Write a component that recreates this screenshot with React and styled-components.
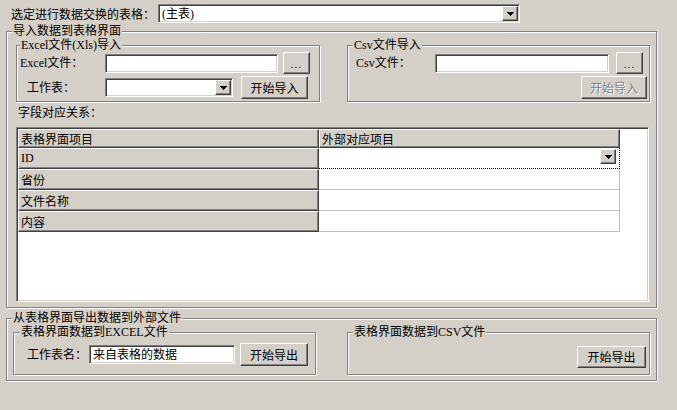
import React from "react";
import styled, { createGlobalStyle } from "styled-components";

const GlobalStyle = createGlobalStyle`
  html, body {
    margin: 0;
    padding: 0;
    background: #d4d0c8;
  }
  body {
    font-family: "Liberation Serif", "Noto Sans CJK SC", serif;
    font-size: 12px;
    color: #000;
  }
`;

const Window = styled.div`
  width: 677px;
  height: 410px;
  box-sizing: border-box;
  background: #d4d0c8;
  overflow: hidden;
  padding: 4px 0 0 6px;
  display: flex;
  flex-direction: column;
`;

const TopRow = styled.div`
  display: flex;
  align-items: center;
  height: 19px;
  padding-left: 5px;
`;

const Label = styled.span`
  width: ${(p) => p.$w}px;
  padding-left: ${(p) => p.$pl || 0}px;
  box-sizing: border-box;
  flex-shrink: 0;
  white-space: nowrap;
  line-height: 14px;
`;

const sunken = `
  box-sizing: border-box;
  border: 1px solid;
  border-color: #808080 #ffffff #ffffff #808080;
  box-shadow: inset 1px 1px 0 #404040, inset -1px -1px 0 #d4d0c8;
  background: #fff;
`;

const raised = `
  box-sizing: border-box;
  border: 1px solid;
  border-color: #ffffff #404040 #404040 #ffffff;
  box-shadow: inset -1px -1px 0 #808080;
  background: #d4d0c8;
`;

const TextField = styled.div`
  ${sunken}
  width: ${(p) => p.$w}px;
  height: 19px;
  padding: 2px 3px 0;
  line-height: 14px;
  white-space: nowrap;
  overflow: hidden;
`;

const ComboBox = styled.div`
  ${sunken}
  width: ${(p) => p.$w}px;
  height: 19px;
  padding: 1px;
  display: flex;
`;

const ComboText = styled.span`
  flex: 1;
  padding: 1px 2px 0;
  line-height: 14px;
  white-space: nowrap;
`;

const DropButton = styled.span`
  ${raised}
  width: 16px;
  height: 15px;
  display: flex;
  align-items: center;
  justify-content: center;
  flex-shrink: 0;
`;

const Button = styled.button`
  ${raised}
  width: ${(p) => p.$w}px;
  height: ${(p) => p.$h || 23}px;
  margin: 0;
  margin-left: ${(p) => p.$ml || 0}px;
  padding: 0;
  font-family: "Noto Sans CJK SC", sans-serif;
  font-size: 12px;
  line-height: 14px;
  color: ${(p) => (p.disabled ? "#808080" : "#000")};
  text-shadow: ${(p) => (p.disabled ? "1px 1px 0 #fff" : "none")};
  flex-shrink: 0;
`;

const DotsButton = styled(Button)`
  font-family: "Liberation Sans", sans-serif;
  font-size: 10px;
  letter-spacing: 1px;
  padding-top: 4px;
`;

const Group = styled.fieldset`
  margin: 0;
  margin-top: ${(p) => p.$mt || 0}px;
  padding: 0;
  min-width: 0;
  width: ${(p) => p.$w}px;
  box-sizing: border-box;
  border: 1px solid #808080;
  box-shadow: inset 1px 1px 0 #fff, 1px 1px 0 #fff;
`;

const Legend = styled.legend`
  margin-left: ${(p) => p.$ml}px;
  padding: 0 1px;
  line-height: 14px;
  background: #d4d0c8;
  font-family: "Liberation Serif", "Noto Sans CJK SC", serif;
`;

const GroupBody = styled.div`
  display: flex;
  flex-direction: column;
  padding: ${(p) => p.$pad};
  gap: ${(p) => p.$gap || 0}px;
`;

const SubRow = styled.div`
  display: flex;
  gap: ${(p) => p.$gap}px;
`;

const FieldRow = styled.div`
  display: flex;
  align-items: center;
  height: ${(p) => p.$h}px;
  justify-content: ${(p) => (p.$end ? "flex-end" : "flex-start")};
  padding-right: ${(p) => p.$pr || 0}px;
`;

const Caption = styled.div`
  margin-top: 4px;
  padding-left: 2px;
  line-height: 14px;
`;

const Grid = styled.div`
  ${sunken}
  margin-top: 7px;
  width: 633px;
  height: 175px;
  padding: 1px;
  display: grid;
  grid-template-columns: 301px 301px;
  grid-template-rows: 19px;
  grid-auto-rows: 21px;
  align-content: start;
`;

const FixedCell = styled.div`
  box-sizing: border-box;
  background: #d4d0c8;
  border-top: 1px solid #fff;
  border-left: 1px solid #fff;
  border-right: 1px solid #404040;
  border-bottom: 1px solid #404040;
  box-shadow: inset -1px -1px 0 #808080;
  padding: 0 2px;
  display: flex;
  align-items: center;
  font-family: "Noto Sans CJK SC", sans-serif;
  white-space: nowrap;
`;

const DataCell = styled.div`
  box-sizing: border-box;
  background: #fff;
  border-right: 1px ${(p) => (p.$focus ? "dotted #000" : "solid #c0c0c0")};
  border-bottom: 1px ${(p) => (p.$focus ? "dotted #000" : "solid #c0c0c0")};
  display: flex;
  justify-content: flex-end;
  align-items: flex-start;
  padding: 1px 3px 0 0;
`;

const Arrow = () => (
  <svg width="7" height="4" viewBox="0 0 7 4" shapeRendering="crispEdges">
    <path d="M0 0h7v1h-1v1h-1v1h-1v1h-1v-1h-1v-1h-1v-1h-1z" fill="#000" />
  </svg>
);

const rows = ["ID", "省份", "文件名称", "内容"];

export default function App() {
  return (
    <Window>
      <GlobalStyle />
      <TopRow>
        <Label $w={147} style={{ fontFamily: "'Noto Sans CJK SC', sans-serif" }}>
          选定进行数据交换的表格：
        </Label>
        <ComboBox $w={362}>
          <ComboText>(主表)</ComboText>
          <DropButton>
            <Arrow />
          </DropButton>
        </ComboBox>
      </TopRow>

      <Group $w={651} $mt={1}>
        <Legend $ml={5}>导入数据到表格界面</Legend>
        <GroupBody $pad="0 0 5px 9px">
          <SubRow $gap={27}>
            <Group $w={304}>
              <Legend $ml={3}>Excel文件(Xls)导入</Legend>
              <GroupBody $pad="0 0 2px 3px" $gap={2}>
                <FieldRow $h={22}>
                  <Label $w={85}>Excel文件：</Label>
                  <TextField $w={173} />
                  <DotsButton $w={27} $h={22} $ml={5}>
                    ...
                  </DotsButton>
                </FieldRow>
                <FieldRow $h={23}>
                  <Label $w={85} $pl={7}>
                    工作表：
                  </Label>
                  <ComboBox $w={128}>
                    <ComboText />
                    <DropButton>
                      <Arrow />
                    </DropButton>
                  </ComboBox>
                  <Button $w={67} $ml={8}>
                    开始导入
                  </Button>
                </FieldRow>
              </GroupBody>
            </Group>
            <Group $w={303}>
              <Legend $ml={5}>Csv文件导入</Legend>
              <GroupBody $pad="0 0 2px 8px" $gap={2}>
                <FieldRow $h={22}>
                  <Label $w={79}>Csv文件：</Label>
                  <TextField $w={174} />
                  <DotsButton $w={27} $h={22} $ml={7}>
                    ...
                  </DotsButton>
                </FieldRow>
                <FieldRow $h={23} $end $pr={2}>
                  <Button $w={66} disabled>
                    开始导入
                  </Button>
                </FieldRow>
              </GroupBody>
            </Group>
          </SubRow>
          <Caption>字段对应关系：</Caption>
          <Grid>
            <FixedCell>表格界面项目</FixedCell>
            <FixedCell>外部对应项目</FixedCell>
            {rows.map((r, i) => (
              <React.Fragment key={r}>
                <FixedCell style={{ fontFamily: i === 0 ? "'Liberation Serif', serif" : undefined }}>
                  {r}
                </FixedCell>
                <DataCell $focus={i === 0}>
                  {i === 0 && (
                    <DropButton>
                      <Arrow />
                    </DropButton>
                  )}
                </DataCell>
              </React.Fragment>
            ))}
          </Grid>
        </GroupBody>
      </Group>

      <Group $w={651} $mt={3}>
        <Legend $ml={5}>从表格界面导出数据到外部文件</Legend>
        <GroupBody $pad="0 0 5px 6px">
          <SubRow $gap={31}>
            <Group $w={303}>
              <Legend $ml={6}>表格界面数据到EXCEL文件</Legend>
              <GroupBody $pad="4px 0 8px 13px">
                <FieldRow $h={23}>
                  <Label $w={62}>工作表名：</Label>
                  <TextField $w={146}>来自表格的数据</TextField>
                  <Button $w={68} $ml={5}>
                    开始导出
                  </Button>
                </FieldRow>
              </GroupBody>
            </Group>
            <Group $w={303}>
              <Legend $ml={5}>表格界面数据到CSV文件</Legend>
              <GroupBody $pad="7px 0 6px 0">
                <FieldRow $h={22} $end $pr={3}>
                  <Button $w={69} $h={22}>
                    开始导出
                  </Button>
                </FieldRow>
              </GroupBody>
            </Group>
          </SubRow>
        </GroupBody>
      </Group>
    </Window>
  );
}
